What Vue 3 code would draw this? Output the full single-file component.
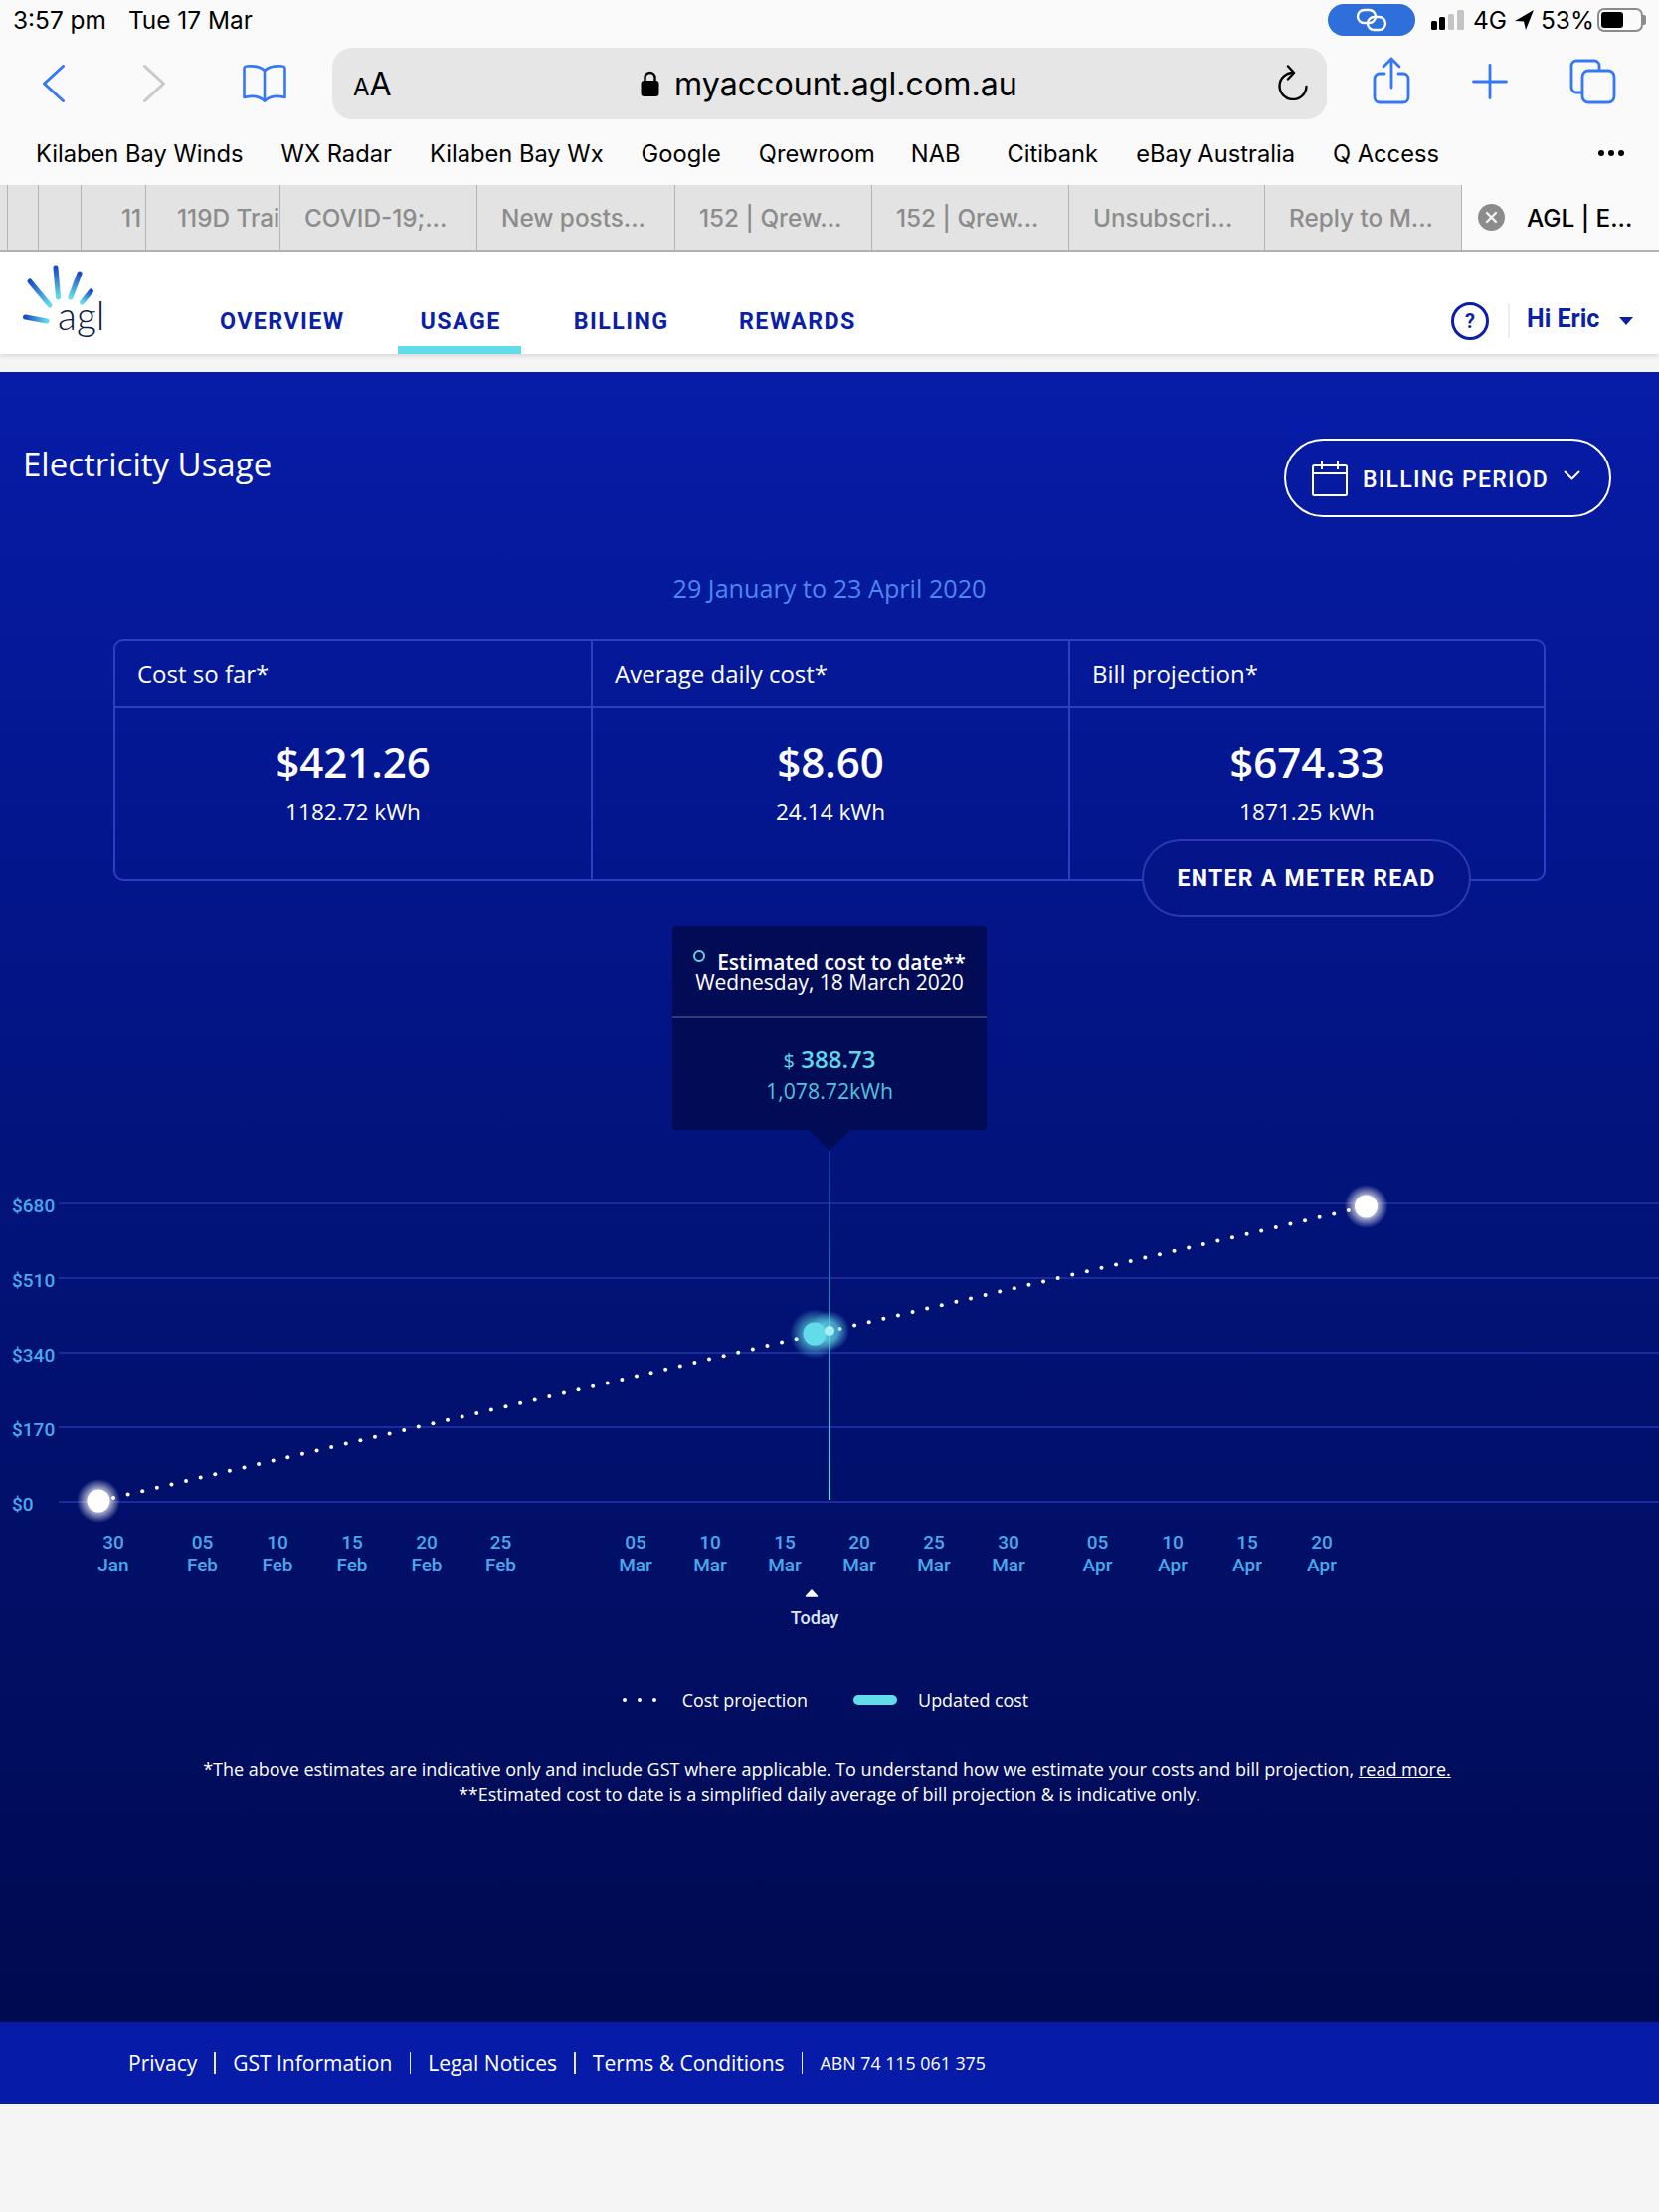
<template>
  <div class="page">
    <div class="chrome">
      <div class="status">
        <span class="status-time">3:57 pm</span>
        <span class="status-date">Tue 17 Mar</span>
        <span class="status-gap"></span>
        <span class="link-pill">
          <svg width="34" height="26" viewBox="0 0 34 26" fill="none" stroke="#fff" stroke-width="2.4">
            <rect x="3" y="3" width="18" height="13" rx="6.5" />
            <rect x="13" y="10" width="18" height="13" rx="6.5" />
          </svg>
        </span>
        <svg class="signal" width="33" height="20" viewBox="0 0 33 20">
          <rect x="0" y="11" width="6" height="9" rx="1.5" fill="#000" />
          <rect x="8" y="7" width="6" height="13" rx="1.5" fill="#000" />
          <rect x="17" y="4" width="6" height="16" rx="1.5" fill="#c4c4c4" />
          <rect x="26" y="0" width="7" height="20" rx="1.5" fill="#c4c4c4" />
        </svg>
        <span class="status-net">4G</span>
        <svg class="locate" width="19" height="20" viewBox="0 0 19 20">
          <path d="M19 0 L0 11 L9 11.5 L11 20 Z" fill="#000" />
        </svg>
        <span class="status-pct">53%</span>
        <span class="battery"><span class="battery-fill"></span></span>
      </div>

      <div class="toolbar">
        <svg class="tool-back" width="22" height="38" viewBox="0 0 22 38" fill="none" stroke="#3478f6" stroke-width="3" stroke-linecap="round" stroke-linejoin="round">
          <path d="M20.5 1.5 L1.5 19 L20.5 36.5" />
        </svg>
        <svg class="tool-fwd" width="22" height="38" viewBox="0 0 22 38" fill="none" stroke="#c9c9c9" stroke-width="3" stroke-linecap="round" stroke-linejoin="round">
          <path d="M1.5 1.5 L20.5 19 L1.5 36.5" />
        </svg>
        <svg class="tool-book" width="44" height="38" viewBox="0 0 44 38" fill="none" stroke="#3478f6" stroke-width="2.6" stroke-linejoin="round" stroke-linecap="round">
          <path d="M22 6 C18 2 10 1 4 1.5 C2.5 1.5 1.5 2.5 1.5 4 L1.5 33 C9 31 17 32 22 36.5 C27 32 35 31 42.500 33 L42.500 4 C42.500 2.500 41.500 1.500 40 1.500 C34 1 26 2 22 6 Z" />
          <path d="M22 6 V36.500" />
        </svg>
        <div class="urlbar">
          <span class="url-aa"><small>A</small>A</span>
          <span class="url-center">
            <svg width="19" height="26" viewBox="0 0 19 26">
              <path d="M4.500 11 V7 a5 5 0 0 1 10 0 V11" fill="none" stroke="#000" stroke-width="2.400" />
              <rect x="0.500" y="10" width="18" height="16" rx="3" fill="#000" />
            </svg>
            <span class="url-text">myaccount.agl.com.au</span>
          </span>
          <svg class="url-reload" width="30" height="36" viewBox="0 0 30 36" fill="none" stroke="#000" stroke-width="2.400" stroke-linecap="round" stroke-linejoin="round">
            <path d="M15 8 A13.500 13.500 0 1 0 28.500 22" />
            <path d="M10 1.500 L16 8 L10 14.500" />
          </svg>
        </div>
        <svg class="tool-share" width="38" height="48" viewBox="0 0 38 48" fill="none" stroke="#3478f6" stroke-width="2.800" stroke-linecap="round" stroke-linejoin="round">
          <path d="M12 17 H7 a5 5 0 0 0 -5 5 V41 a5 5 0 0 0 5 5 H31 a5 5 0 0 0 5 -5 V22 a5 5 0 0 0 -5 -5 H26" />
          <path d="M19 31 V2 M11 10 L19 2 L27 10" />
        </svg>
        <svg class="tool-plus" width="36" height="36" viewBox="0 0 36 36" fill="none" stroke="#3478f6" stroke-width="2.800" stroke-linecap="round">
          <path d="M18 1.500 V34.500 M1.500 18 H34.500" />
        </svg>
        <svg class="tool-tabs" width="47" height="46" viewBox="0 0 47 46" fill="none" stroke="#3478f6" stroke-width="2.800" stroke-linejoin="round">
          <path d="M13 34 H7 a5 5 0 0 1 -5 -5 V7 a5 5 0 0 1 5 -5 H25 a5 5 0 0 1 5 5 V12" />
          <rect x="13" y="12" width="32" height="32" rx="6" />
        </svg>
      </div>

      <div class="bookmarks">
        <span v-for="b in bookmarks" :key="b" class="bookmark">{{ b }}</span>
        <span class="bookmark-more"><i></i><i></i><i></i></span>
      </div>

      <div class="tabs">
        <div
          v-for="(t, i) in tabs"
          :key="i"
          class="tab"
          :style="{ width: t.w + 'px', paddingLeft: t.pad + 'px' }"
        >
          {{ t.label }}
        </div>
        <div class="tab-active">
          <span class="tab-close">
            <svg width="13" height="13" viewBox="0 0 13 13" stroke="#f4f4f4" stroke-width="2.400" stroke-linecap="round">
              <path d="M2 2 L11 11 M11 2 L2 11" />
            </svg>
          </span>
          <span>AGL | E...</span>
        </div>
      </div>
    </div>

    <header class="site-nav">
      <div class="logo">
        <svg width="84" height="76" viewBox="0 0 84 76">
          <defs>
            <linearGradient
              v-for="(r, i) in rays"
              :id="'ray' + i"
              :key="i"
              gradientUnits="userSpaceOnUse"
              :x1="r[0]"
              :y1="r[1]"
              :x2="r[2]"
              :y2="r[3]"
            >
              <stop offset="0" stop-color="#1a49c8" />
              <stop offset="1" stop-color="#62dce9" />
            </linearGradient>
          </defs>
          <line
            v-for="(r, i) in rays"
            :key="i"
            :x1="r[0]"
            :y1="r[1]"
            :x2="r[2]"
            :y2="r[3]"
            :stroke="'url(#ray' + i + ')'"
            stroke-width="5"
            stroke-linecap="round"
          />
        </svg>
        <span class="logo-text">agl</span>
      </div>
      <nav class="nav-links">
        <a class="nav-link">OVERVIEW</a>
        <a class="nav-link active">USAGE</a>
        <a class="nav-link">BILLING</a>
        <a class="nav-link">REWARDS</a>
      </nav>
      <span class="help">?</span>
      <span class="nav-div"></span>
      <span class="hi">Hi Eric</span>
      <span class="caret"></span>
    </header>

    <main class="usage">
      <div class="usage-head">
        <h1 class="usage-title">Electricity Usage</h1>
        <button class="period">
          <svg width="36" height="36" viewBox="0 0 36 36" fill="none" stroke="#fff" stroke-width="2">
            <rect x="1" y="5" width="34" height="30" rx="1.500" />
            <path d="M1 13 H35 M10 1 V9 M26 1 V9" />
          </svg>
          <span>BILLING PERIOD</span>
          <svg class="period-chev" width="17" height="10" viewBox="0 0 17 10" fill="none" stroke="#fff" stroke-width="2" stroke-linecap="round" stroke-linejoin="round">
            <path d="M1.500 1.500 L8.500 8.500 L15.500 1.500" />
          </svg>
        </button>
      </div>

      <p class="range">29 January to 23 April 2020</p>

      <div class="summary">
        <div v-for="s in summary" :key="s.title" class="summary-col">
          <div class="summary-title">{{ s.title }}</div>
          <div class="summary-body">
            <div class="summary-value">{{ s.value }}</div>
            <div class="summary-kwh">{{ s.kwh }}</div>
          </div>
        </div>
        <button class="meter">ENTER A METER READ</button>
      </div>

      <div class="chart">
        <svg class="chart-svg" width="1668" height="720" viewBox="0 931 1668 720">
          <defs>
            <linearGradient id="vline" gradientUnits="userSpaceOnUse" x1="0" y1="1157" x2="0" y2="1508">
              <stop offset="0" stop-color="#14309c" />
              <stop offset="0.5" stop-color="#2f86c4" />
              <stop offset="1" stop-color="#5fd8e8" />
            </linearGradient>
            <radialGradient id="glow-white">
              <stop offset="0.5" stop-color="#fff" stop-opacity="0.7" />
              <stop offset="1" stop-color="#fff" stop-opacity="0" />
            </radialGradient>
            <radialGradient id="glow-cyan">
              <stop offset="0.45" stop-color="#62dce9" stop-opacity="0.65" />
              <stop offset="1" stop-color="#62dce9" stop-opacity="0" />
            </radialGradient>
          </defs>

          <line v-for="g in grid" :key="g.y" class="grid" x1="59" x2="1668" :y1="g.y" :y2="g.y" />
          <text v-for="g in grid" :key="g.label" class="axis" x="12" :y="g.y + 9">{{ g.label }}</text>

          <g v-for="d in dates" :key="d.x + d.mon">
            <text class="axis" :x="d.x" y="1557" text-anchor="middle">{{ d.day }}</text>
            <text class="axis" :x="d.x" y="1580" text-anchor="middle">{{ d.mon }}</text>
          </g>

          <circle v-for="(d, i) in dots" :key="i" :cx="d.x" :cy="d.y" r="2" fill="#fff" />

          <rect x="833" y="1157" width="2" height="351" fill="url(#vline)" />

          <circle cx="99" cy="1509" r="22" fill="url(#glow-white)" />
          <circle cx="99" cy="1509" r="11.500" fill="#fff" />
          <circle cx="1373.500" cy="1213" r="22" fill="url(#glow-white)" />
          <circle cx="1373.500" cy="1213" r="11.500" fill="#fff" />

          <circle cx="834" cy="1338" r="20" fill="url(#glow-cyan)" />
          <circle cx="819" cy="1341" r="25" fill="url(#glow-cyan)" />
          <circle cx="819" cy="1341" r="11.500" fill="#62dce9" />
          <circle cx="834" cy="1338" r="5" fill="#a9eff3" />

          <path d="M810.500 1605 L816 1599 L821.500 1605 Z" fill="#fff" stroke="#fff" stroke-width="1.500" stroke-linejoin="round" />
          <text class="today" x="819" y="1633" text-anchor="middle">Today</text>
        </svg>

        <div class="tip">
          <div class="tip-head">
            <div class="tip-title"><i class="tip-ring"></i>Estimated cost to date**</div>
            <div class="tip-date">Wednesday, 18 March 2020</div>
          </div>
          <div class="tip-body">
            <div class="tip-cost"><small>$</small> 388.73</div>
            <div class="tip-kwh">1,078.72kWh</div>
          </div>
        </div>
      </div>

      <div class="legend">
        <span class="legend-dots"><i></i><i></i><i></i></span>
        <span class="legend-label">Cost projection</span>
        <span class="legend-pill"></span>
        <span class="legend-label">Updated cost</span>
      </div>

      <p class="notes">
        *The above estimates are indicative only and include GST where applicable. To understand how we estimate your costs and bill projection, <u class="notes-link">read more.</u><br />
        **Estimated cost to date is a simplified daily average of bill projection &amp; is indicative only.
      </p>
    </main>

    <footer class="foot">
      <template v-for="f in footerLinks" :key="f">
        <a class="foot-link">{{ f }}</a>
        <span class="foot-sep"></span>
      </template>
      <span class="foot-abn">ABN 74 115 061 375</span>
    </footer>
  </div>
</template>

<script setup>
const bookmarks = [
  "Kilaben Bay Winds",
  "WX Radar",
  "Kilaben Bay Wx",
  "Google",
  "Qrewroom",
  "NAB",
  "Citibank",
  "eBay Australia",
  "Q Access",
];

const tabs = [
  { w: 8, pad: 0, label: "" },
  { w: 31, pad: 0, label: "" },
  { w: 43, pad: 0, label: "" },
  { w: 65, pad: 40, label: "11" },
  { w: 135, pad: 31, label: "119D Trail" },
  { w: 198, pad: 24, label: "COVID-19;..." },
  { w: 199, pad: 24, label: "New posts..." },
  { w: 198, pad: 24, label: "152 | Qrew..." },
  { w: 198, pad: 24, label: "152 | Qrew..." },
  { w: 197, pad: 24, label: "Unsubscri..." },
  { w: 198, pad: 24, label: "Reply to M..." },
];

// offsets are inside the logo svg, which sits at 22,264 on the page
const rays = [
  [8, 19, 28, 43],
  [34, 5, 36.5, 35],
  [58, 11, 49, 35],
  [69.5, 29, 60.5, 40],
  [3.5, 55, 25, 59],
];

const summary = [
  { title: "Cost so far*", value: "$421.26", kwh: "1182.72 kWh" },
  { title: "Average daily cost*", value: "$8.60", kwh: "24.14 kWh" },
  { title: "Bill projection*", value: "$674.33", kwh: "1871.25 kWh" },
];

const grid = [
  { y: 1210, label: "$680" },
  { y: 1285, label: "$510" },
  { y: 1360, label: "$340" },
  { y: 1435, label: "$170" },
  { y: 1510, label: "$0" },
];

const dates = [
  { x: 114, day: "30", mon: "Jan" },
  { x: 203.5, day: "05", mon: "Feb" },
  { x: 279, day: "10", mon: "Feb" },
  { x: 354, day: "15", mon: "Feb" },
  { x: 429, day: "20", mon: "Feb" },
  { x: 503.5, day: "25", mon: "Feb" },
  { x: 639, day: "05", mon: "Mar" },
  { x: 714, day: "10", mon: "Mar" },
  { x: 789, day: "15", mon: "Mar" },
  { x: 864, day: "20", mon: "Mar" },
  { x: 939, day: "25", mon: "Mar" },
  { x: 1014, day: "30", mon: "Mar" },
  { x: 1103.5, day: "05", mon: "Apr" },
  { x: 1179, day: "10", mon: "Apr" },
  { x: 1254, day: "15", mon: "Apr" },
  { x: 1329, day: "20", mon: "Apr" },
];

const dots = [...Array(86)].map((_, i) => ({
  x: 114 + i * 14.61,
  y: 1506 - i * 3.4,
}));

const footerLinks = ["Privacy", "GST Information", "Legal Notices", "Terms & Conditions"];
</script>

<style>
html,
body {
  margin: 0;
  background: #f5f5f5;
}
</style>

<style scoped>
.page {
  width: 1668px;
  min-height: 2224px;
  background: #f5f5f5;
  font-family: "Open Sans", sans-serif;
  overflow: hidden;
}
.chrome {
  background: #fafafa;
  font-family: Inter, "Liberation Sans", sans-serif;
  color: #000;
}
.status {
  height: 40px;
  display: flex;
  align-items: center;
  padding-left: 13px;
  font-size: 24.4px;
}
.status-date {
  margin-left: 22px;
}
.status-gap {
  flex: 1;
}
.link-pill {
  width: 88px;
  height: 32px;
  margin-top: -1px;
  border-radius: 16px;
  background: #2f6fdc;
  display: flex;
  align-items: center;
  justify-content: center;
}
.signal {
  margin-left: 16px;
}
.status-net {
  margin-left: 9px;
  width: 33px;
}
.locate {
  margin-left: 9px;
}
.status-pct {
  margin-left: 7px;
  width: 57px;
}
.battery {
  width: 46px;
  height: 24px;
  margin-right: 16px;
  box-sizing: border-box;
  border: 2px solid #8c8c8c;
  border-radius: 7px;
  padding: 2px;
  position: relative;
}
.battery::after {
  content: "";
  position: absolute;
  right: -5px;
  top: 5px;
  width: 3px;
  height: 10px;
  border-radius: 0 2px 2px 0;
  background: #8c8c8c;
}
.battery-fill {
  display: block;
  width: 22px;
  height: 16px;
  border-radius: 3px;
  background: #000;
}
.toolbar {
  height: 88px;
  display: flex;
  align-items: center;
}
.tool-back {
  margin-left: 43px;
}
.tool-fwd {
  margin-left: 79px;
}
.tool-book {
  margin-left: 78px;
}
.urlbar {
  width: 1000px;
  height: 72px;
  margin-left: 46px;
  border-radius: 20px;
  background: #e6e6e6;
  display: flex;
  align-items: center;
  position: relative;
}
.url-aa {
  margin-left: 21px;
  font-size: 32px;
}
.url-aa small {
  font-size: 24px;
}
.url-center {
  position: absolute;
  left: 310px;
  display: flex;
  align-items: center;
  gap: 15px;
  font-size: 32.2px;
}
.url-reload {
  position: absolute;
  right: 19px;
  top: 17px;
}
.tool-share {
  margin-left: 46px;
  margin-top: -6px;
}
.tool-plus {
  margin-left: 62px;
  margin-top: -4px;
}
.tool-tabs {
  margin-left: 62px;
  margin-top: -4px;
}
.bookmarks {
  height: 52px;
  padding: 0 35px 6px 36px;
  display: flex;
  align-items: center;
  font-size: 23.7px;
}
.bookmark {
  margin-right: 38px;
  white-space: nowrap;
}
.bookmark:nth-child(5) {
  margin-right: 36px;
}
.bookmark:nth-child(6) {
  margin-right: 47px;
}
.bookmark-more {
  margin-left: auto;
  display: flex;
  gap: 4px;
}
.bookmark-more i {
  width: 6px;
  height: 6px;
  border-radius: 50%;
  background: #000;
}
.tabs {
  height: 65px;
  display: flex;
  background: #e3e3e3;
  border-bottom: 2px solid #b5b5b5;
  font-size: 24.3px;
  font-weight: 500;
}
.tab {
  box-sizing: border-box;
  border-right: 1px solid #b5b5b5;
  line-height: 67px;
  color: #8c8c8c;
  white-space: nowrap;
  overflow: hidden;
}
.tab-active {
  flex: 1;
  background: #fafafa;
  display: flex;
  align-items: center;
  padding-left: 16px;
  color: #000;
}
.tab-close {
  width: 27px;
  height: 27px;
  margin-right: 22px;
  border-radius: 50%;
  background: #8c8c8c;
  display: flex;
  align-items: center;
  justify-content: center;
}
.site-nav {
  height: 103px;
  background: #fff;
  box-shadow: 0 2px 5px rgba(0, 0, 0, 0.12);
  display: flex;
  align-items: center;
  position: relative;
  font-family: Roboto, sans-serif;
  color: #0b1fa8;
}
.logo {
  width: 221px;
  height: 103px;
  position: relative;
  flex: none;
}
.logo svg {
  position: absolute;
  left: 22px;
  top: 11px;
}
.logo-text {
  position: absolute;
  left: 58px;
  top: 41px;
  font-family: Lato, sans-serif;
  font-weight: 300;
  font-size: 39px;
  line-height: 46px;
  color: #0f1a40;
}
.nav-links {
  display: flex;
  height: 103px;
}
.nav-link {
  box-sizing: border-box;
  height: 103px;
  padding: 56px 0 0;
  margin-right: 76px;
  font-size: 23.3px;
  font-weight: 700;
  letter-spacing: 1.4px;
  position: relative;
}
.nav-link:nth-child(2) {
  margin-right: 73px;
}
.nav-link:nth-child(3) {
  margin-right: 70.5px;
}
.nav-link.active::after {
  content: "";
  position: absolute;
  left: -23px;
  width: 124px;
  bottom: 0;
  height: 8px;
  background: #62dce9;
}
.help {
  position: absolute;
  left: 1459px;
  top: 51px;
  box-sizing: border-box;
  width: 38px;
  height: 38px;
  border: 3px solid #0b1fa8;
  border-radius: 50%;
  text-align: center;
  font-size: 20px;
  font-weight: 700;
  line-height: 32px;
}
.nav-div {
  position: absolute;
  left: 1516px;
  top: 52px;
  width: 2px;
  height: 35px;
  background: #eceef2;
}
.hi {
  position: absolute;
  left: 1535px;
  top: 53px;
  font-size: 25px;
  font-weight: 700;
  line-height: 30px;
}
.caret {
  position: absolute;
  left: 1628px;
  top: 66px;
  border-left: 7.5px solid transparent;
  border-right: 7.5px solid transparent;
  border-top: 8px solid #0b1fa8;
}
.usage {
  margin-top: 18px;
  height: 1659px;
  background: linear-gradient(180deg, #071ca8 0%, #03158a 32%, #02137a 50%, #000a50 100%);
  color: #fff;
  overflow: hidden;
}
.usage-head {
  display: flex;
  justify-content: space-between;
  align-items: flex-start;
  padding: 67px 48px 0 23px;
}
.usage-title {
  margin: 5px 0 0;
  font-size: 33px;
  font-weight: 400;
  line-height: 42px;
}
.period {
  width: 329px;
  height: 79px;
  box-sizing: border-box;
  border: 2px solid #fff;
  border-radius: 40px;
  background: transparent;
  color: #fff;
  font-family: Roboto, sans-serif;
  font-size: 23px;
  font-weight: 500;
  letter-spacing: 1.25px;
  display: flex;
  align-items: center;
  padding: 0 0 0 26px;
}
.period span {
  margin: 3px 0 0 15px;
}
.period-chev {
  margin-left: 15px;
  margin-top: -6px;
}
.range {
  margin: 53px 0 0;
  text-align: center;
  font-size: 25.2px;
  line-height: 36px;
  color: #4d88f0;
}
.summary {
  width: 1440px;
  height: 244px;
  box-sizing: border-box;
  margin: 33px 0 0 114px;
  border: 2px solid #2c3fc0;
  border-radius: 10px;
  display: grid;
  grid-template-columns: 478px 480px 1fr;
  position: relative;
}
.summary-col + .summary-col {
  border-left: 2px solid #2c3fc0;
}
.summary-title {
  height: 68px;
  box-sizing: border-box;
  padding: 17px 0 0 22px;
  border-bottom: 2px solid #2c3fc0;
  font-size: 24px;
  line-height: 33px;
}
.summary-body {
  text-align: center;
}
.summary-value {
  margin-top: 25px;
  font-size: 42px;
  font-weight: 600;
  line-height: 57px;
}
.summary-kwh {
  margin-top: 5px;
  font-size: 22.6px;
  line-height: 33px;
}
.meter {
  position: absolute;
  left: 1032px;
  top: 200px;
  width: 331px;
  height: 78px;
  box-sizing: border-box;
  border: 2px solid #2c39b0;
  border-radius: 39px;
  background: #04158a;
  color: #fff;
  font-family: Roboto, sans-serif;
  font-size: 23px;
  font-weight: 700;
  letter-spacing: 1.3px;
}
.chart {
  position: relative;
  margin-top: 45px;
  height: 720px;
}
.chart-svg {
  display: block;
}
.grid {
  stroke: #1a2b9e;
  stroke-width: 2;
}
.axis {
  fill: #4aa8ea;
  font-family: Roboto, sans-serif;
  font-size: 19px;
  font-weight: 500;
}
.today {
  fill: #dfe4f5;
  font-family: Roboto, sans-serif;
  font-size: 18px;
  font-weight: 500;
}
.tip {
  position: absolute;
  left: 676px;
  top: 0;
  width: 316px;
  height: 205px;
  border-radius: 4px;
  background: #020b55;
  text-align: center;
}
.tip::after {
  content: "";
  position: absolute;
  left: 137px;
  top: 205px;
  border-left: 21px solid transparent;
  border-right: 21px solid transparent;
  border-top: 21px solid #020b55;
}
.tip-head {
  height: 93px;
  box-sizing: border-box;
  padding-top: 24px;
  border-bottom: 2px solid #333c7a;
  font-size: 21px;
  line-height: 20px;
}
.tip-title {
  font-weight: 600;
}
.tip-ring {
  display: inline-block;
  box-sizing: border-box;
  width: 12px;
  height: 12px;
  margin-right: 12px;
  border: 2px solid #5fd8e8;
  border-radius: 50%;
  vertical-align: 8px;
}
.tip-body {
  padding-top: 26px;
  color: #5fd8e8;
}
.tip-cost {
  font-size: 24px;
  font-weight: 600;
  line-height: 30px;
}
.tip-cost small {
  font-size: 20px;
  font-weight: 400;
}
.tip-kwh {
  font-size: 21.3px;
  line-height: 30px;
  color: #4fc3dd;
}
.legend {
  display: flex;
  justify-content: center;
  align-items: center;
  height: 30px;
  margin-top: 43px;
  padding-right: 8px;
  font-size: 17.9px;
}
.legend-dots {
  display: flex;
  gap: 11px;
  margin-right: 26px;
}
.legend-dots i {
  width: 4px;
  height: 4px;
  border-radius: 50%;
  background: #fff;
}
.legend-pill {
  width: 44px;
  height: 10px;
  margin: 0 21px 0 46px;
  border-radius: 5px;
  background: #62dce9;
}
.notes {
  margin: 43px 0 0;
  text-align: center;
  font-size: 18px;
  line-height: 25px;
}
.notes-link {
  margin-right: 5px;
}
.foot {
  height: 81px;
  background: #061ca8;
  color: #fff;
  display: flex;
  align-items: center;
  padding: 0 0 1px 129px;
  font-size: 21px;
}
.foot-sep {
  width: 1.500px;
  height: 22px;
  margin: 0 17.200px;
  background: #e8eaf8;
}
.foot-abn {
  font-size: 17.8px;
}
</style>
